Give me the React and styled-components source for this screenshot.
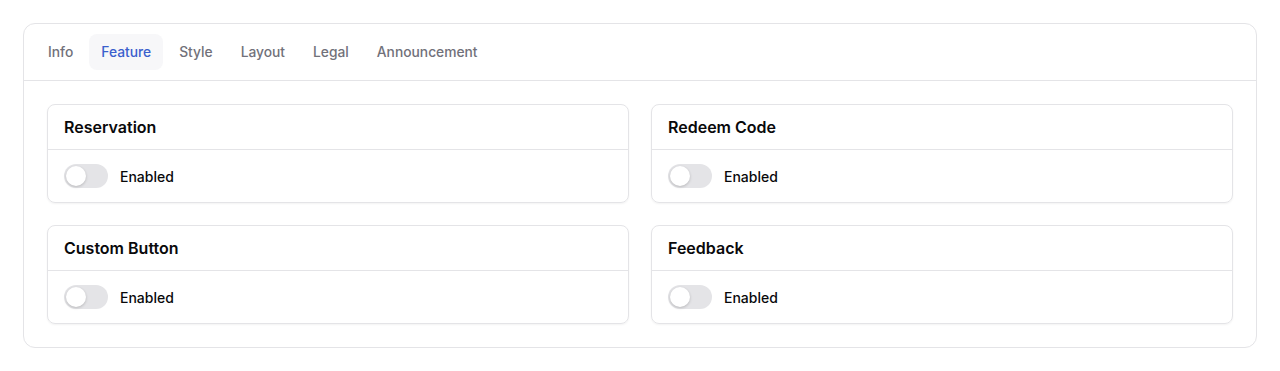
import { useState } from 'react'
import styled, { createGlobalStyle } from 'styled-components'

const GlobalStyle = createGlobalStyle`
  body {
    margin: 0;
    background: #fff;
    font-family: Inter, "Noto Sans", sans-serif;
    color: #09090b;
  }
`

const tabs = ['Info', 'Feature', 'Style', 'Layout', 'Legal', 'Announcement']
const features = ['Reservation', 'Redeem Code', 'Custom Button', 'Feedback']

export default function App() {
  const [active, setActive] = useState('Feature')
  const [on, setOn] = useState({})

  return (
    <Page>
      <GlobalStyle />
      <Panel>
        <TabList>
          {tabs.map((t) => (
            <Tab key={t} $active={t === active} onClick={() => setActive(t)}>
              {t}
            </Tab>
          ))}
        </TabList>
        <Grid>
          {features.map((f) => (
            <Card key={f}>
              <CardHeader>{f}</CardHeader>
              <CardBody>
                <Switch
                  $on={!!on[f]}
                  onClick={() => setOn({ ...on, [f]: !on[f] })}
                >
                  <span />
                </Switch>
                <Label>Enabled</Label>
              </CardBody>
            </Card>
          ))}
        </Grid>
      </Panel>
    </Page>
  )
}

const Page = styled.div`
  padding: 23px;
`

const Panel = styled.div`
  border: 1px solid #e4e4e7;
  border-radius: 12px;
  background: #fff;
`

const TabList = styled.div`
  display: flex;
  gap: 4px;
  padding: 10px 12px 10px;
  border-bottom: 1px solid #e4e4e7;
`

const Tab = styled.button`
  border: none;
  background: ${(p) => (p.$active ? '#f7f7f9' : 'transparent')};
  color: ${(p) => (p.$active ? '#3a5fcd' : '#71717a')};
  font-family: Inter, sans-serif;
  font-size: 13.8px;
  font-weight: 500;
  padding: 0 12px;
  height: 36px;
  border-radius: 8px;
  cursor: pointer;
`

const Grid = styled.div`
  display: grid;
  grid-template-columns: 1fr 1fr;
  gap: 22px 22px;
  padding: 23px 23px 23px;
`

const Card = styled.div`
  border: 1px solid #e4e4e7;
  border-radius: 8px;
  box-shadow: 0 1px 2px rgba(0, 0, 0, 0.05);
`

const CardHeader = styled.div`
  height: 44px;
  display: flex;
  align-items: center;
  padding: 0 16px;
  font-size: 16px;
  font-weight: 600;
  border-bottom: 1px solid #e4e4e7;
`

const CardBody = styled.div`
  display: flex;
  align-items: center;
  gap: 12px;
  padding: 14px 16px 14px;
`

const Switch = styled.button`
  width: 44px;
  height: 24px;
  border: none;
  padding: 2px;
  border-radius: 999px;
  background: ${(p) => (p.$on ? '#3a5fcd' : '#e4e4e7')};
  display: flex;
  align-items: center;
  cursor: pointer;

  span {
    width: 20px;
    height: 20px;
    border-radius: 50%;
    background: #fff;
    box-shadow: 0 1px 3px rgba(0, 0, 0, 0.2);
    transform: translateX(${(p) => (p.$on ? '20px' : '0')});
    transition: transform 0.15s;
  }
`

const Label = styled.span`
  font-size: 14px;
  font-weight: 500;
`
